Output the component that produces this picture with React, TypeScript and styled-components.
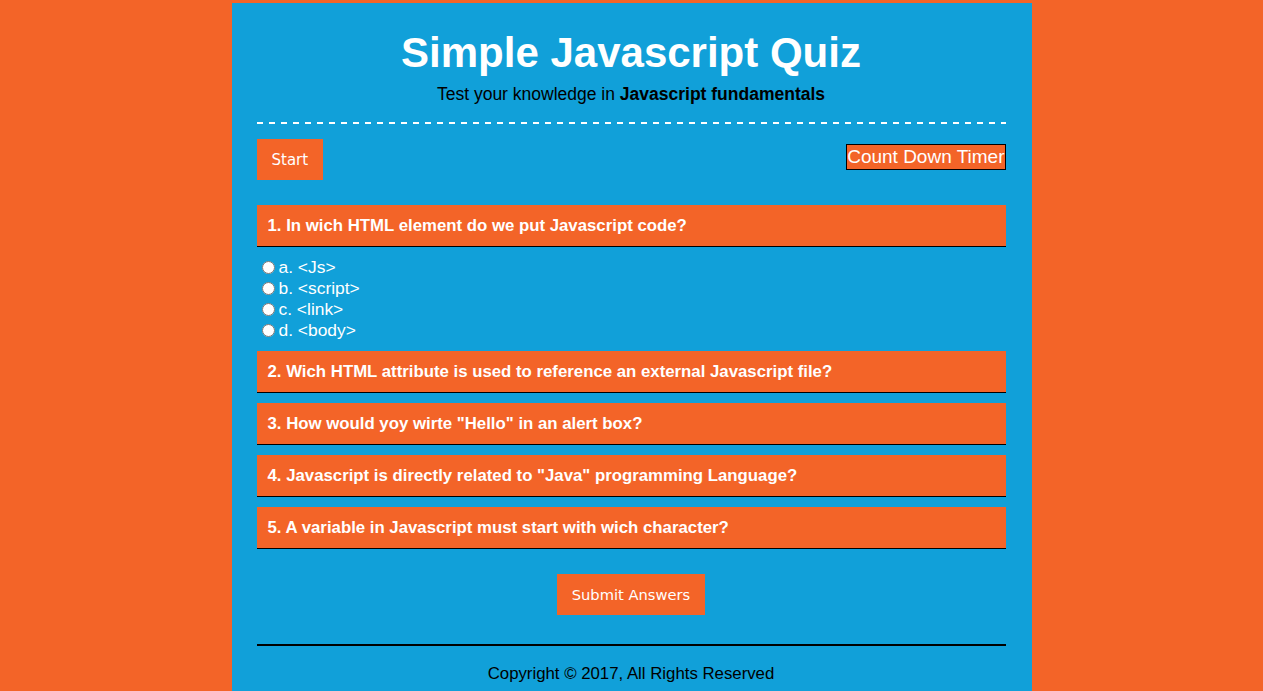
import React from "react";
import styled, { createGlobalStyle } from "styled-components";

const ORANGE = "#f36428";
const BLUE = "#11a0d9";

const GlobalStyle = createGlobalStyle`
  html, body {
    margin: 0;
    padding: 0;
    background: ${ORANGE};
    font-family: "Liberation Sans", Arial, sans-serif;
  }
`;

const Container = styled.div`
  width: 800px;
  box-sizing: border-box;
  margin: 3px auto 0;
  padding: 26px 26px 10px 25px;
  background: ${BLUE};
`;

const Header = styled.header`
  text-align: center;
  padding-bottom: 18px;
`;

const Title = styled.h1`
  margin: 0;
  font-size: 42px;
  line-height: 48px;
  font-weight: bold;
  color: #ffffff;
`;

const Subtitle = styled.p`
  margin: 7px 0 0;
  font-size: 17.5px;
  line-height: 20px;
  color: #000000;
`;

const DashedRule = styled.hr`
  margin: 0;
  border: none;
  height: 2px;
  background: repeating-linear-gradient(
    to right,
    #ffffff 0 6px,
    transparent 6px 12px
  );
`;

const Toolbar = styled.div`
  display: flex;
  justify-content: space-between;
  align-items: flex-start;
  margin-top: 15px;
`;

const ActionButton = styled.button<{ $size?: number }>`
  background: ${ORANGE};
  color: #ffffff;
  border: none;
  font-family: "DejaVu Sans", Tahoma, sans-serif;
  font-size: ${(p) => p.$size ?? 15}px;
  height: 41px;
  padding: 0 15px;
  cursor: pointer;
`;

const Timer = styled.div`
  margin-top: 5px;
  background: ${ORANGE};
  color: #ffffff;
  border: 1px solid #000000;
  font-size: 19px;
  line-height: 22px;
  padding: 1px 0;
`;

const QuestionList = styled.div`
  margin-top: 25px;
  display: flex;
  flex-direction: column;
  gap: 10px;
`;

const QuestionTitle = styled.div`
  background: ${ORANGE};
  color: #ffffff;
  font-weight: bold;
  font-size: 16.8px;
  height: 41px;
  display: flex;
  align-items: center;
  padding: 0 10px 0 11px;
  border-bottom: 1px solid #000000;
`;

const Options = styled.div`
  padding: 10px 0 0;
`;

const Option = styled.label`
  display: flex;
  align-items: center;
  height: 21px;
  color: #ffffff;
  font-size: 17.4px;
`;

const Radio = styled.input`
  width: 13px;
  height: 13px;
  margin: 0 4px 0 5px;
`;

const SubmitRow = styled.div`
  display: flex;
  justify-content: center;
  margin-top: 25px;
`;

const Footer = styled.footer`
  margin-top: 29px;
  border-top: 2px solid #000000;
  padding-top: 18px;
  text-align: center;
  font-size: 16.8px;
  line-height: 19px;
  color: #000000;
`;

const questions = [
  {
    q: "1. In wich HTML element do we put Javascript code?",
    options: ["a. <Js>", "b. <script>", "c. <link>", "d. <body>"],
  },
  { q: "2. Wich HTML attribute is used to reference an external Javascript file?", options: [] },
  { q: '3. How would yoy wirte "Hello" in an alert box?', options: [] },
  { q: '4. Javascript is directly related to "Java" programming Language?', options: [] },
  { q: "5. A variable in Javascript must start with wich character?", options: [] },
];

export default function App() {
  return (
    <>
      <GlobalStyle />
      <Container>
        <Header>
          <Title>Simple Javascript Quiz</Title>
          <Subtitle>
            Test your knowledge in <b>Javascript fundamentals</b>
          </Subtitle>
        </Header>
        <DashedRule />
        <Toolbar>
          <ActionButton>Start</ActionButton>
          <Timer>Count Down Timer</Timer>
        </Toolbar>
        <QuestionList>
          {questions.map((item, i) => (
            <div key={i}>
              <QuestionTitle>{item.q}</QuestionTitle>
              {item.options.length > 0 && (
                <Options>
                  {item.options.map((o, j) => (
                    <Option key={j}>
                      <Radio type="radio" name={`q${i}`} />
                      {o}
                    </Option>
                  ))}
                </Options>
              )}
            </div>
          ))}
        </QuestionList>
        <SubmitRow>
          <ActionButton $size={14.7}>Submit Answers</ActionButton>
        </SubmitRow>
        <Footer>Copyright © 2017, All Rights Reserved</Footer>
      </Container>
    </>
  );
}
